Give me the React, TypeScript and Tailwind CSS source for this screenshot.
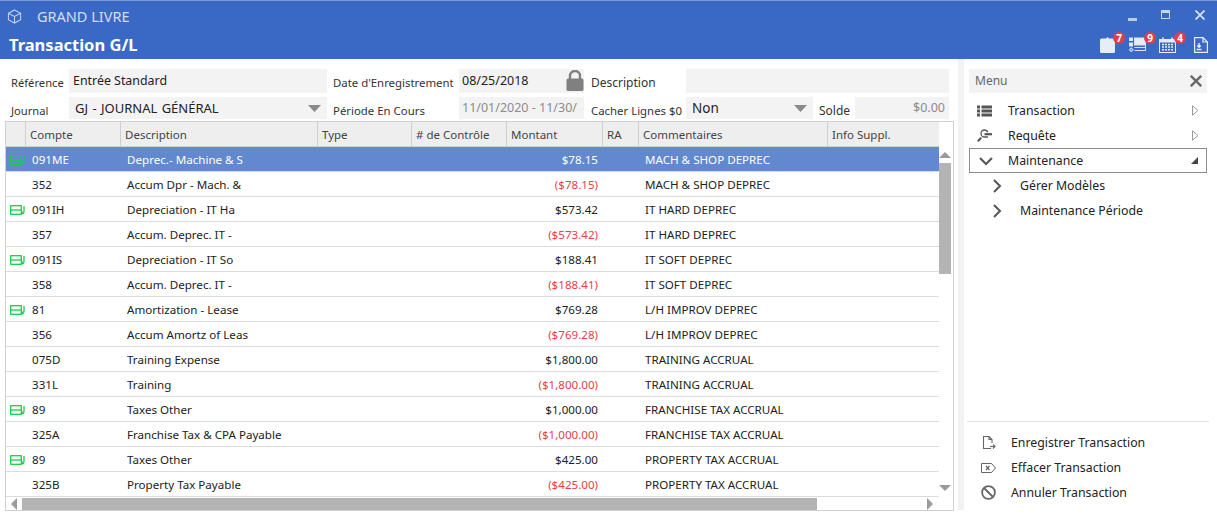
import React from "react";

type Row = { icon?: boolean; c: string; d: string; a: string; neg?: boolean; k: string; sel?: boolean };
const rows: Row[] = [
  { icon: true, c: "091ME", d: "Deprec.- Machine & S", a: "$78.15", k: "MACH & SHOP DEPREC", sel: true },
  { c: "352", d: "Accum Dpr - Mach. &", a: "($78.15)", neg: true, k: "MACH & SHOP DEPREC" },
  { icon: true, c: "091IH", d: "Depreciation - IT Ha", a: "$573.42", k: "IT HARD DEPREC" },
  { c: "357", d: "Accum. Deprec. IT -", a: "($573.42)", neg: true, k: "IT HARD DEPREC" },
  { icon: true, c: "091IS", d: "Depreciation - IT So", a: "$188.41", k: "IT SOFT DEPREC" },
  { c: "358", d: "Accum. Deprec. IT -", a: "($188.41)", neg: true, k: "IT SOFT DEPREC" },
  { icon: true, c: "81", d: "Amortization - Lease", a: "$769.28", k: "L/H IMPROV DEPREC" },
  { c: "356", d: "Accum Amortz of Leas", a: "($769.28)", neg: true, k: "L/H IMPROV DEPREC" },
  { c: "075D", d: "Training Expense", a: "$1,800.00", k: "TRAINING ACCRUAL" },
  { c: "331L", d: "Training", a: "($1,800.00)", neg: true, k: "TRAINING ACCRUAL" },
  { icon: true, c: "89", d: "Taxes Other", a: "$1,000.00", k: "FRANCHISE TAX ACCRUAL" },
  { c: "325A", d: "Franchise Tax & CPA Payable", a: "($1,000.00)", neg: true, k: "FRANCHISE TAX ACCRUAL" },
  { icon: true, c: "89", d: "Taxes Other", a: "$425.00", k: "PROPERTY TAX ACCRUAL" },
  { c: "325B", d: "Property Tax Payable", a: "($425.00)", neg: true, k: "PROPERTY TAX ACCRUAL" },
];

const headers: [string, string][] = [
  ["", "w-[20px]"],
  ["Compte", "w-[95px]"],
  ["Description", "w-[197px]"],
  ["Type", "w-[94px]"],
  ["# de Contrôle", "w-[95px]"],
  ["Montant", "w-[96px]"],
  ["RA", "w-[36px]"],
  ["Commentaires", "w-[189px]"],
  ["Info Suppl.", "flex-1"],
];

function Marker() {
  return (
    <svg width="15" height="10" viewBox="0 0 15 10" fill="none" stroke="#16d04a" strokeWidth="1.3">
      <rect x="0.7" y="0.7" width="10.6" height="8.6" />
      <path d="M0.7 5H11.3" />
      <path d="M14 1V7.5M13.9 8.5H12.2M12.6 6.6L12.6 8.8" />
    </svg>
  );
}

function Badge({ n }: { n: number }) {
  return (
    <span className="absolute right-[-10px] top-[-5px] w-[12px] h-[12px] rounded-full bg-[#d9404f] text-white text-[10px] font-bold leading-[12px] text-center">
      {n}
    </span>
  );
}

function Caret() {
  return (
    <svg width="13" height="7" viewBox="0 0 13 7" className="shrink-0">
      <path d="M0 0H13L6.5 7Z" fill="#8a8a8a" />
    </svg>
  );
}

function Chevron({ dir }: { dir: "down" | "right" }) {
  return (
    <svg width="14" height="14" viewBox="0 0 14 14" fill="none" stroke="#555" strokeWidth="2">
      {dir === "down" ? <path d="M1 4L7 10L13 4" /> : <path d="M4 1L10 7L4 13" />}
    </svg>
  );
}

function OpenTri() {
  return (
    <svg width="7" height="11" viewBox="0 0 7 11" fill="none" stroke="#9a9a9a">
      <path d="M0.5 0.8L6 5.5L0.5 10.2Z" />
    </svg>
  );
}

export default function App() {
  return (
    <div
      className="w-[1217px] h-[517px] bg-white flex flex-col overflow-hidden text-[12px] text-[#222]"
      style={{ fontFamily: '"Noto Sans", "Open Sans", sans-serif' }}
    >
      {/* Title bar */}
      <div className="h-[59px] shrink-0 bg-[#3a69c5] border-t border-[#7d9bd8] flex flex-col">
        <div className="h-[31px] flex items-center pl-[7px]">
          <svg width="15" height="15" viewBox="0 0 16 16" fill="none" stroke="#c6d4ef" strokeWidth="1.1">
            <path d="M8 1L14.5 4.5V11.5L8 15L1.5 11.5V4.5Z" />
            <path d="M1.5 4.5L8 8L14.5 4.5M8 8V15" />
          </svg>
          <span className="ml-[15px] text-[14.5px] text-[#d3def3] whitespace-nowrap">GRAND LIVRE</span>
          <div className="ml-auto flex items-center h-full">
            <div className="w-[9px] h-[3px] bg-[#b9caec] mr-[24px] mt-[6px]" />
            <div className="w-[9px] h-[9px] border border-[#c6d4ef] border-t-[3px] mr-[25px] mb-[4px]" />
            <svg width="10" height="10" viewBox="0 0 10 10" stroke="#d6e0f4" strokeWidth="1.8" className="mr-[12px] mb-[4px]">
              <path d="M0.5 0.5L9.5 9.5M9.5 0.5L0.5 9.5" />
            </svg>
          </div>
        </div>
        <div className="flex-1 flex items-start pl-[9px]">
          <span className="text-[16.5px] leading-[25px] font-bold text-white whitespace-nowrap">Transaction G/L</span>
          <div className="ml-auto flex items-start mt-[5px] pr-[9px]">
            <div className="relative w-[15px] h-[15px] mr-[14px]">
              <svg width="15" height="16" viewBox="0 0 15 16">
                <path d="M1.5 1.5H6L7.5 0L9 1.5H13.5Q15 1.5 15 3V14.5Q15 16 13.5 16H1.5Q0 16 0 14.5V3Q0 1.5 1.5 1.5Z" fill="#e6ecf8" />
              </svg>
              <Badge n={7} />
            </div>
            <div className="relative w-[17px] h-[15px] mr-[13px]">
              <svg width="17" height="15" viewBox="0 0 17 15" fill="none" stroke="#dbe4f6">
                <rect x="0.5" y="1" width="3" height="2.5" fill="#e6ecf8" />
                <rect x="0.5" y="6" width="3" height="3" fill="#e6ecf8" />
                <rect x="1" y="11.5" width="2.5" height="2.5" transform="rotate(45 2.2 12.7)" />
                <rect x="5.5" y="1" width="11.5" height="7" fill="#e6ecf8" />
                <path d="M5.5 10.5H17M5.5 13.5H17M16.5 8V14" />
              </svg>
              <Badge n={9} />
            </div>
            <div className="relative w-[17px] h-[15px] mr-[18px]">
              <svg width="17" height="16" viewBox="0 0 17 16" fill="none">
                <rect x="0.5" y="2.5" width="16" height="13" stroke="#e6ecf8" />
                <rect x="0.5" y="2.5" width="16" height="3" fill="#e6ecf8" />
                <path d="M4 0.5V3.5M13 0.5V3.5" stroke="#e6ecf8" strokeWidth="1.6" />
                <path d="M3 7.5H14M3 10H14M3 12.8H14" stroke="#e6ecf8" strokeWidth="1.6" strokeDasharray="2 1" />
              </svg>
              <Badge n={4} />
            </div>
            <svg width="14" height="16" viewBox="0 0 14 16" fill="none" stroke="#e6ecf8" strokeWidth="1.2">
              <path d="M0.6 0.6H9L13.4 5V15.4H0.6Z" />
              <path d="M9 0.6V5H13.4" />
              <path d="M5 6V10M3.3 8.5L5 10.3L6.7 8.5M2.5 12.5H7.5" strokeWidth="1.4" />
            </svg>
          </div>
        </div>
      </div>

      <div className="flex-1 flex min-h-0">
        {/* Left panel */}
        <div className="w-[958px] shrink-0 flex flex-col pt-[10px]">
          <div className="flex h-[24px] pl-[11px]">
            <span className="w-[58px] leading-[28px] text-[11.2px] text-[#333] whitespace-nowrap">Référence</span>
            <div className="w-[258px] bg-[#f3f3f3] pl-[4px] leading-[23px] text-[12.4px] text-[#222]">Entrée Standard</div>
            <span className="w-[132px] pl-[6px] leading-[28px] text-[11.4px] text-[#333] whitespace-nowrap">Date d'Enregistrement</span>
            <div className="w-[125px] bg-[#f3f3f3] pl-[3px] leading-[23px] text-[12.5px] flex items-start justify-between">
              <span>08/25/2018</span>
              <svg width="18" height="21" viewBox="0 0 18 21" className="mt-[1px]">
                <path d="M4 9V6A5 5 0 0 1 14 6V9" fill="none" stroke="#808080" strokeWidth="2.4" />
                <rect x="0.5" y="8.5" width="17" height="12.5" rx="1.5" fill="#808080" />
              </svg>
            </div>
            <span className="w-[102px] pl-[7px] leading-[28px] text-[#333] whitespace-nowrap">Description</span>
            <div className="w-[263px] bg-[#f3f3f3]" />
          </div>
          <div className="flex h-[22px] mt-[4px] pl-[11px]">
            <span className="w-[58px] leading-[28px] text-[11.2px] text-[#333] whitespace-nowrap">Journal</span>
            <div className="w-[258px] bg-[#f3f3f3] pl-[6px] pr-[6px] flex items-center justify-between">
              <span className="text-[13px] [word-spacing:1px] whitespace-nowrap pt-[1px]">GJ - JOURNAL GÉNÉRAL</span>
              <Caret />
            </div>
            <span className="w-[132px] pl-[6px] leading-[28px] text-[11.4px] text-[#333] whitespace-nowrap">Période En Cours</span>
            <div className="w-[125px] bg-[#f3f3f3] pl-[3px] leading-[22px] text-[12.5px] text-[#8c8c8c] overflow-hidden whitespace-nowrap">11/01/2020 - 11/30/</div>
            <span className="w-[102px] pl-[7px] leading-[28px] text-[11.4px] text-[#333] whitespace-nowrap">Cacher Lignes $0</span>
            <div className="w-[127px] bg-[#f3f3f3] pl-[6px] pr-[6px] flex items-center justify-between">
              <span className="text-[13.5px] leading-[20px]">Non</span>
              <Caret />
            </div>
            <span className="w-[42px] pl-[6px] leading-[28px] text-[#333] whitespace-nowrap">Solde</span>
            <div className="w-[94px] bg-[#f3f3f3] pr-[4px] text-right leading-[22px] text-[12.5px] text-[#8c8c8c]">$0.00</div>
          </div>

          {/* Grid */}
          <div className="ml-[5px] w-[949px] h-[390px] mt-[2px] border border-[#d0d0d0] flex flex-col">
            <div className="flex-1 flex min-h-0">
              <div className="w-[933px] flex flex-col">
                <div className="h-[25px] flex bg-[#eeeeee] border-b border-[#cfcfcf] text-[11.5px]">
                  {headers.map(([h, w], i) => (
                    <div key={i} className={`${w} pl-[4px] leading-[26px] text-[#444] whitespace-nowrap ${i < headers.length - 1 ? "border-r border-[#cfcfcf]" : ""}`}>
                      {h}
                    </div>
                  ))}
                </div>
                {rows.map((r, i) => (
                  <div key={i} className={`h-[25px] shrink-0 flex items-center border-b pt-[1px] text-[11.6px] ${r.sel ? "bg-[#6288d0] text-white border-[#dcdcdc]" : "border-[#dcdcdc] text-[#222]"}`}>
                    <div className="w-[20px] pl-[4px] flex items-center">{r.icon && <Marker />}</div>
                    <div className="w-[95px] pl-[6px]">{r.c}</div>
                    <div className="w-[197px] pl-[6px] whitespace-nowrap">{r.d}</div>
                    <div className="w-[94px]" />
                    <div className="w-[95px]" />
                    <div className={`w-[96px] pr-[5px] text-right ${r.neg ? "text-[#e8404a]" : ""}`}>{r.a}</div>
                    <div className="w-[36px]" />
                    <div className="w-[190px] pl-[6px] whitespace-nowrap">{r.k}</div>
                  </div>
                ))}
              </div>
              <div className="flex-1 flex flex-col pt-[30px]">
                <svg width="12" height="6" viewBox="0 0 12 6" className="shrink-0">
                  <path d="M0 6H12L6 0Z" fill="#9a9a9a" />
                </svg>
                <div className="w-[12px] h-[111px] bg-[#b4b4b4] mt-[5px]" />
                <div className="flex-1" />
                <svg width="12" height="6" viewBox="0 0 12 6" className="shrink-0 mb-[6px]">
                  <path d="M0 0H12L6 6Z" fill="#9a9a9a" />
                </svg>
              </div>
            </div>
            <div className="h-[13px] shrink-0 flex items-center pl-[5px]">
              <svg width="6" height="12" viewBox="0 0 6 12" className="shrink-0">
                <path d="M6 0V12L0 6Z" fill="#9a9a9a" />
              </svg>
              <div className="w-[795px] h-[12px] bg-[#b4b4b4] ml-[5px]" />
              <svg width="6" height="12" viewBox="0 0 6 12" className="shrink-0 ml-[110px]">
                <path d="M0 0V12L6 6Z" fill="#9a9a9a" />
              </svg>
            </div>
          </div>
        </div>

        {/* Gutter */}
        <div className="w-[6px] shrink-0 h-[451px] bg-[#f2f2f2]" />

        {/* Right panel */}
        <div className="flex-1 flex flex-col pt-[10px] pl-[5px] pr-[10px] text-[12.3px] text-[#222]">
          <div className="h-[24px] bg-[#f3f3f3] flex items-center justify-between pl-[6px] pr-[5px] text-[12px] text-[#666]">
            <span>Menu</span>
            <svg width="12" height="12" viewBox="0 0 12 12" stroke="#6a6a6a" strokeWidth="2.4">
              <path d="M0.8 0.8L11.2 11.2M11.2 0.8L0.8 11.2" />
            </svg>
          </div>
          <div className="mt-[5px] h-[25px] flex items-center pl-[8px] pr-[8px]">
            <svg width="15" height="12" viewBox="0 0 15 12" fill="#555" className="shrink-0">
              <rect x="0" y="0.5" width="3" height="3" /><rect x="4.5" y="0.5" width="10.5" height="3" />
              <rect x="0" y="4.5" width="3" height="3" /><rect x="4.5" y="4.5" width="10.5" height="3" />
              <rect x="0" y="8.5" width="3" height="3" /><rect x="4.5" y="8.5" width="10.5" height="3" />
            </svg>
            <span className="ml-[16px] pt-[1px]">Transaction</span>
            <span className="ml-auto"><OpenTri /></span>
          </div>
          <div className="h-[25px] flex items-center pl-[8px] pr-[8px]">
            <svg width="15" height="13" viewBox="0 0 15 13" fill="none" stroke="#555" strokeWidth="1.3" className="shrink-0">
              <path d="M0.8 12.2L4.2 8.8" strokeWidth="2" />
              <path d="M11 8H7.5A3.5 3.5 0 1 1 7.5 1C9 1 10.3 2 10.7 3.3" />
              <path d="M7.5 5.2H15" strokeWidth="2.2" />
            </svg>
            <span className="ml-[16px] pt-[1px]">Requête</span>
            <span className="ml-auto"><OpenTri /></span>
          </div>
          <div className="h-[25px] flex items-center pl-[9px] pr-[8px] border border-[#8c8c8c]">
            <Chevron dir="down" />
            <span className="ml-[15px] pt-[1px]">Maintenance</span>
            <svg width="7" height="7" viewBox="0 0 7 7" className="ml-auto">
              <path d="M7 0V7H0Z" fill="#444" />
            </svg>
          </div>
          <div className="h-[25px] flex items-center pl-[21px]">
            <Chevron dir="right" />
            <span className="ml-[16px] pt-[1px]">Gérer Modèles</span>
          </div>
          <div className="h-[25px] flex items-center pl-[21px]">
            <Chevron dir="right" />
            <span className="ml-[16px] pt-[1px]">Maintenance Période</span>
          </div>
          <div className="flex-1" />
          <div className="border-t border-[#e2e2e2] -ml-[2px] mr-[-2px] pt-[8px] pb-[12px]">
            <div className="h-[25px] flex items-center pl-[15px]">
              <svg width="14" height="14" viewBox="0 0 14 14" fill="none" stroke="#666" strokeWidth="1.1" className="shrink-0">
                <path d="M9 12.5H1.5V0.5H7L10 3.5V7M7 0.5V3.5H10" />
                <path d="M8 10.5H13M11 8.5L13 10.5L11 12.5" />
              </svg>
              <span className="ml-[15px] pt-[1px]">Enregistrer Transaction</span>
            </div>
            <div className="h-[25px] flex items-center pl-[14px]">
              <svg width="15" height="10" viewBox="0 0 15 10" fill="none" stroke="#666" className="shrink-0">
                <path d="M0.5 0.5H10.5L14.5 5L10.5 9.5H0.5Z" />
                <path d="M5 3L8.5 7M8.5 3L5 7" strokeWidth="1.2" />
              </svg>
              <span className="ml-[15px] pt-[1px]">Effacer Transaction</span>
            </div>
            <div className="h-[25px] flex items-center pl-[14px]">
              <svg width="15" height="15" viewBox="0 0 15 15" fill="none" stroke="#666" strokeWidth="1.8" className="shrink-0">
                <circle cx="7.5" cy="7.5" r="6.4" />
                <path d="M3 3L12 12" />
              </svg>
              <span className="ml-[15px] pt-[1px]">Annuler Transaction</span>
            </div>
          </div>
        </div>
      </div>
    </div>
  );
}
